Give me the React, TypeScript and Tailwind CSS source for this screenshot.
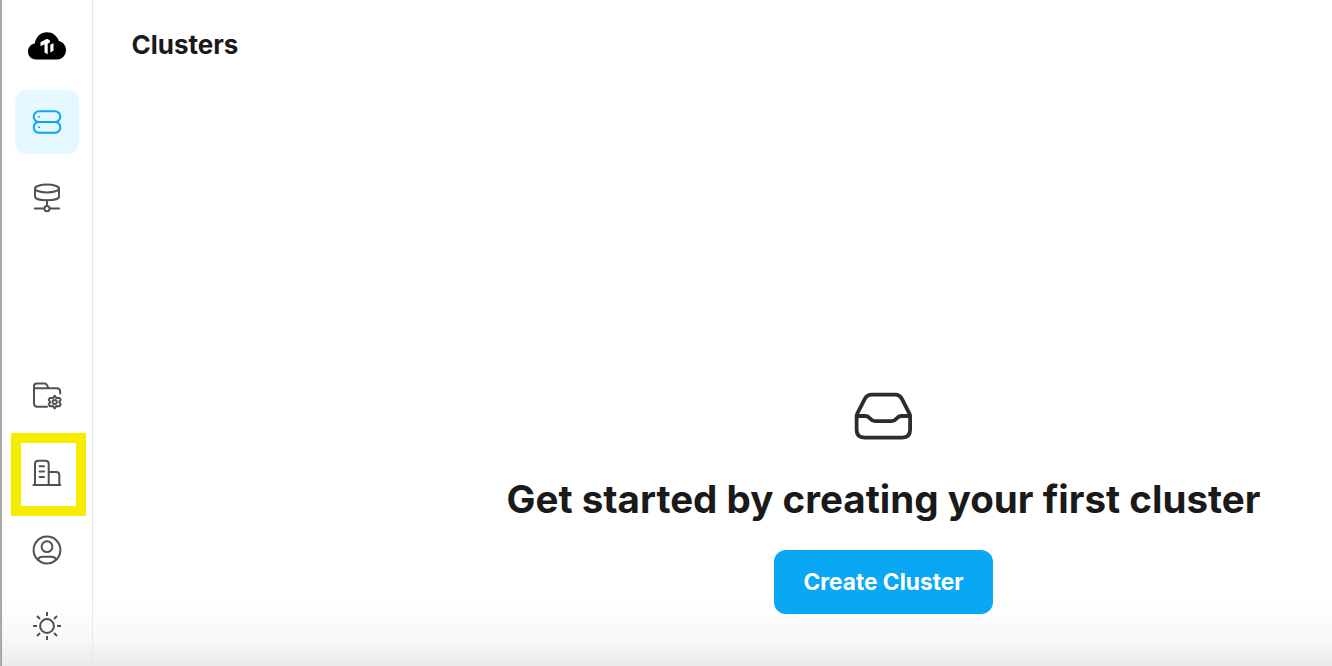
import React from "react";
import { clsx } from "clsx";

function Logo() {
  return (
    <svg width="38" height="28" viewBox="0 0 38 28" className="block">
      <path
        d="M8 27.5C3.4 27.5 0 24.2 0 19.8c0-4.1 2.7-7.7 6.7-8.2C7.9 4.8 12.6.3 19 .3c5.6 0 10.2 3.4 11.8 8.8 4.3.9 7.2 4.5 7.2 9 0 5.3-3.8 9.4-8.8 9.4z"
        fill="#000"
      />
      <path d="M12.5 10.200 19 6.700l2.900 1.700v2.100l-2.200 1.200v10.600l-3.200-1.700v-8.400l-4 2.100z" fill="#fff" />
      <path d="m22.300 12.700 3.200-1.800v7.800l-3.200 1.800z" fill="#fff" />
    </svg>
  );
}

function Icon({ children }: { children: React.ReactNode }) {
  return (
    <svg
      width="64"
      height="64"
      viewBox="0 0 64 64"
      fill="none"
      stroke="currentColor"
      strokeWidth="2"
      strokeLinecap="round"
      strokeLinejoin="round"
    >
      {children}
    </svg>
  );
}

function ClusterIcon() {
  return (
    <Icon>
      <rect x="18.7" y="21.2" width="26.6" height="10.8" rx="5.4" />
      <rect x="18.7" y="32" width="26.6" height="10.8" rx="5.4" />
      <path d="M23.8 26.8h.4M23.8 37.2h.4" strokeWidth="1.7" />
    </Icon>
  );
}

function DataServiceIcon() {
  return (
    <Icon>
      <ellipse cx="32" cy="22.5" rx="12" ry="3.9" />
      <path d="M20 22.5v8.2c0 2 5.3 3.5 12 3.5s12-1.5 12-3.5v-8.2" />
      <path d="M32 34.5v5.300M19.800 42.600h9.200M35 42.600h9.200" />
      <circle cx="32" cy="42.6" r="2.6" />
    </Icon>
  );
}

function ProjectSettingsIcon() {
  return (
    <Icon>
      <path d="M32 40.8h-9.500c-2.200 0-3.500-1.300-3.500-3.500V20.300c0-1.700 1-2.700 2.700-2.700h7.800c1.300 0 2 .4 2.500 1.500l1.500 3.200M19 22.300h22.700c2.200 0 3.500 1.300 3.500 3.500v1.700" />
      <path d="m39.700 29.700 1.700 2.400 3.200-.1 1.100 1.700-1.500 2.400 1.500 2.400-1.100 1.700-3.200-.1-1.700 2.300-1.700-2.300-3.200.1-1.100-1.700 1.500-2.400-1.500-2.400 1.100-1.700 3.200.1z" />
      <circle cx="39.7" cy="36.1" r="2.1" strokeWidth="1.9" />
    </Icon>
  );
}

function OrganizationIcon() {
  return (
    <Icon>
      <path d="M18.400 43h27M20 43V22c0-2.100 1.200-3.200 3.200-3.200h7.300c2 0 3.200 1.100 3.200 3.200v21M33.700 30h7.600c1.900 0 3 1.100 3 3v10" />
      <path d="M24.600 24.200h4.400M24.600 29.600h4.400M24.600 35h4.400" />
    </Icon>
  );
}

function AccountIcon() {
  return (
    <Icon>
      <circle cx="32" cy="32" r="13.4" />
      <circle cx="32" cy="28.7" r="5.4" />
      <path d="M23 41.500c.9-1.900 2.400-2.700 4.500-2.700h9c2.100 0 3.600.8 4.500 2.700" />
    </Icon>
  );
}

function ThemeIcon() {
  return (
    <Icon>
      <circle cx="32" cy="32" r="6.9" />
      <path
        d="M32 18v4M32 42v4M18 32h4M42 32h4M22 22l3 3M39 39l3 3M22 42l3-3M39 25l3-3"
        strokeLinecap="butt"
      />
    </Icon>
  );
}

function InboxIcon() {
  return (
    <svg
      width="80"
      height="70"
      viewBox="0 0 80 70"
      fill="none"
      stroke="#2c2c2c"
      strokeWidth="3.8"
      strokeLinecap="round"
      strokeLinejoin="round"
      className="mr-px"
    >
      <path d="M13.600 36.500v13.300c0 5 2.600 7.800 7.800 7.800h37.900c5.200 0 7.800-2.800 7.800-7.800V36.500c0-1.200-.2-2-.8-3.200l-7-13.700c-1.700-3.400-3.500-4.900-7.300-4.900H28.700c-3.800 0-5.600 1.500-7.300 4.900l-7 13.700c-.6 1.200-.8 2-.8 3.200z" />
      <path d="M14 36h8.500c5 0 4.200 5.200 9.500 5.200h16.700c5.300 0 4.500-5.200 9.500-5.200h8.500" />
    </svg>
  );
}

function NavItem({ label, active, children }: { label: string; active?: boolean; children: React.ReactNode }) {
  return (
    <a
      href="#"
      aria-label={label}
      className={clsx("block size-16 rounded-xl", active ? "bg-[#e5f7ff] text-[#0ca6f2]" : "text-[#515151]")}
    >
      {children}
    </a>
  );
}

export default function App() {
  return (
    <div className="flex h-[666px] w-full overflow-hidden bg-linear-to-b from-white from-90% via-[#f8f8f8] via-96% to-[#ebebeb] font-['Inter',sans-serif] text-[#1a1a1a]">
      <div className="w-0.5 shrink-0 bg-linear-to-r from-[#b5b5b5] to-[#999]" />
      <aside className="flex w-[91px] shrink-0 flex-col items-center border-r border-[#e8e8e8] pt-8 pb-2">
        <Logo />
        <nav className="mt-[30px] flex flex-col gap-3">
          <NavItem label="Clusters" active>
            <ClusterIcon />
          </NavItem>
          <NavItem label="Data Service">
            <DataServiceIcon />
          </NavItem>
        </nav>
        <nav className="mt-auto flex flex-col gap-3">
          <NavItem label="Project Settings">
            <ProjectSettingsIcon />
          </NavItem>
          <div className="relative">
            <NavItem label="Organization">
              <OrganizationIcon />
            </NavItem>
            <div className="absolute -top-[9px] -left-1 h-[83px] w-[75px] border-10 border-[#f5ec00]" />
          </div>
          <NavItem label="Account">
            <AccountIcon />
          </NavItem>
          <NavItem label="Theme">
            <ThemeIcon />
          </NavItem>
        </nav>
      </aside>

      {/* The content pane runs past the right edge of the window */}
      <main className="flex w-[1581px] shrink-0 flex-col">
        <h1 className="pt-[29px] pl-[38.5px] text-[26px] leading-8 font-bold">Clusters</h1>
        <section className="mt-[319px] flex flex-col items-center">
          <InboxIcon />
          <h2 className="mt-[25px] text-[38.55px] leading-[48px] font-bold">
            Get started by creating your first cluster
          </h2>
          <button className="mt-[27px] h-16 w-[219px] rounded-xl bg-[#0aa7f4] text-[22.7px] font-bold text-white">
            Create Cluster
          </button>
        </section>
      </main>
    </div>
  );
}
